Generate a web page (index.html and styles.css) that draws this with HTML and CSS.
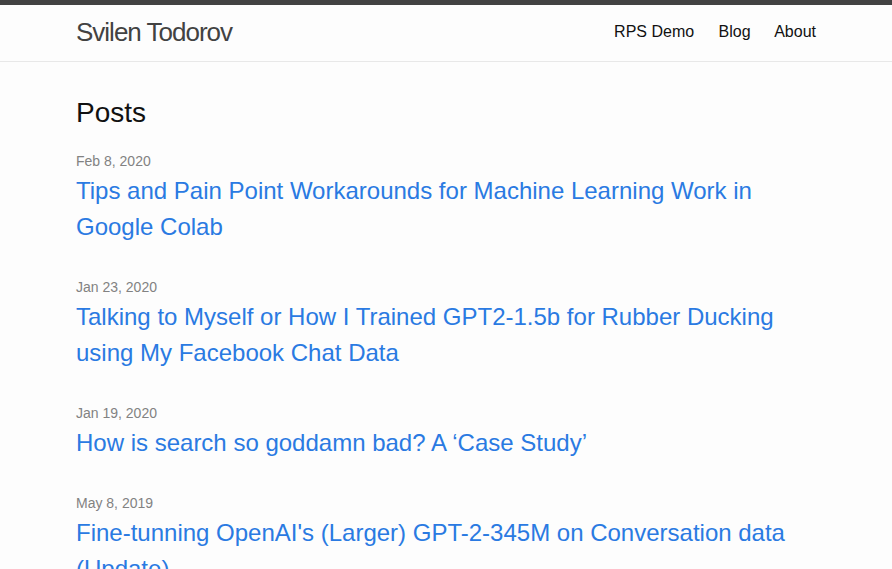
FILE: index.html
```html
<!DOCTYPE html>
<html lang="en">
<head>
<meta charset="utf-8">
<title>Svilen Todorov</title>
<link rel="stylesheet" href="styles.css">
</head>
<body>
<header class="site-header">
  <div class="wrapper header-inner">
    <a class="site-title" href="#">Svilen Todorov</a>
    <nav class="site-nav">
      <a class="page-link" href="#">RPS Demo</a>
      <a class="page-link" href="#">Blog</a>
      <a class="page-link" href="#">About</a>
    </nav>
  </div>
</header>
<main class="page-content">
  <div class="wrapper">
    <h2 class="post-list-heading">Posts</h2>
    <ul class="post-list">
      <li>
        <span class="post-meta">Feb 8, 2020</span>
        <h3 class="post-title"><a class="post-link" href="#">Tips and Pain Point Workarounds for Machine Learning Work in Google Colab</a></h3>
      </li>
      <li>
        <span class="post-meta">Jan 23, 2020</span>
        <h3 class="post-title"><a class="post-link" href="#">Talking to Myself or How I Trained GPT2-1.5b for Rubber Ducking using My Facebook Chat Data</a></h3>
      </li>
      <li>
        <span class="post-meta">Jan 19, 2020</span>
        <h3 class="post-title"><a class="post-link" href="#">How is search so goddamn bad? A ‘Case Study’</a></h3>
      </li>
      <li>
        <span class="post-meta">May 8, 2019</span>
        <h3 class="post-title"><a class="post-link" href="#">Fine-tunning OpenAI's (Larger) GPT-2-345M on Conversation data (Update)</a></h3>
      </li>
    </ul>
  </div>
</main>
</body>
</html>
```
FILE: styles.css
```css
* { box-sizing: border-box; }
html, body { margin: 0; padding: 0; }
body {
  font-family: "Liberation Sans", Arial, Helvetica, sans-serif;
  font-size: 16px;
  line-height: 1.5;
  color: #111;
  background: #fdfdfd;
}
a { text-decoration: none; }
.wrapper {
  max-width: 800px;
  margin: 0 auto;
  padding: 0 30px;
}
.site-header {
  box-sizing: content-box;
  border-top: 5px solid #424242;
  border-bottom: 1px solid #e8e8e8;
  min-height: 56px;
}
.header-inner {
  display: flex;
  justify-content: space-between;
  align-items: flex-start;
}
.site-title {
  font-size: 26px;
  line-height: 54px;
  letter-spacing: -1px;
  color: #424242;
}
.site-nav { line-height: 54px; }
.page-link {
  color: #111;
  line-height: 1.5;
}
.page-link:not(:last-child) { margin-right: 20px; }
.page-content { padding: 30px 0; }
.post-list-heading {
  font-size: 28px;
  font-weight: 400;
  line-height: 1.5;
  margin: 0 0 15px;
}
.post-list {
  list-style: none;
  margin: 0;
  padding: 0;
}
.post-list li { margin-bottom: 30px; }
.post-meta {
  font-size: 14px;
  color: #828282;
}
.post-title {
  margin: 0;
  font-weight: 400;
}
.post-link {
  display: block;
  font-size: 24px;
  line-height: 36px;
  color: #2a7ae2;
}
```
